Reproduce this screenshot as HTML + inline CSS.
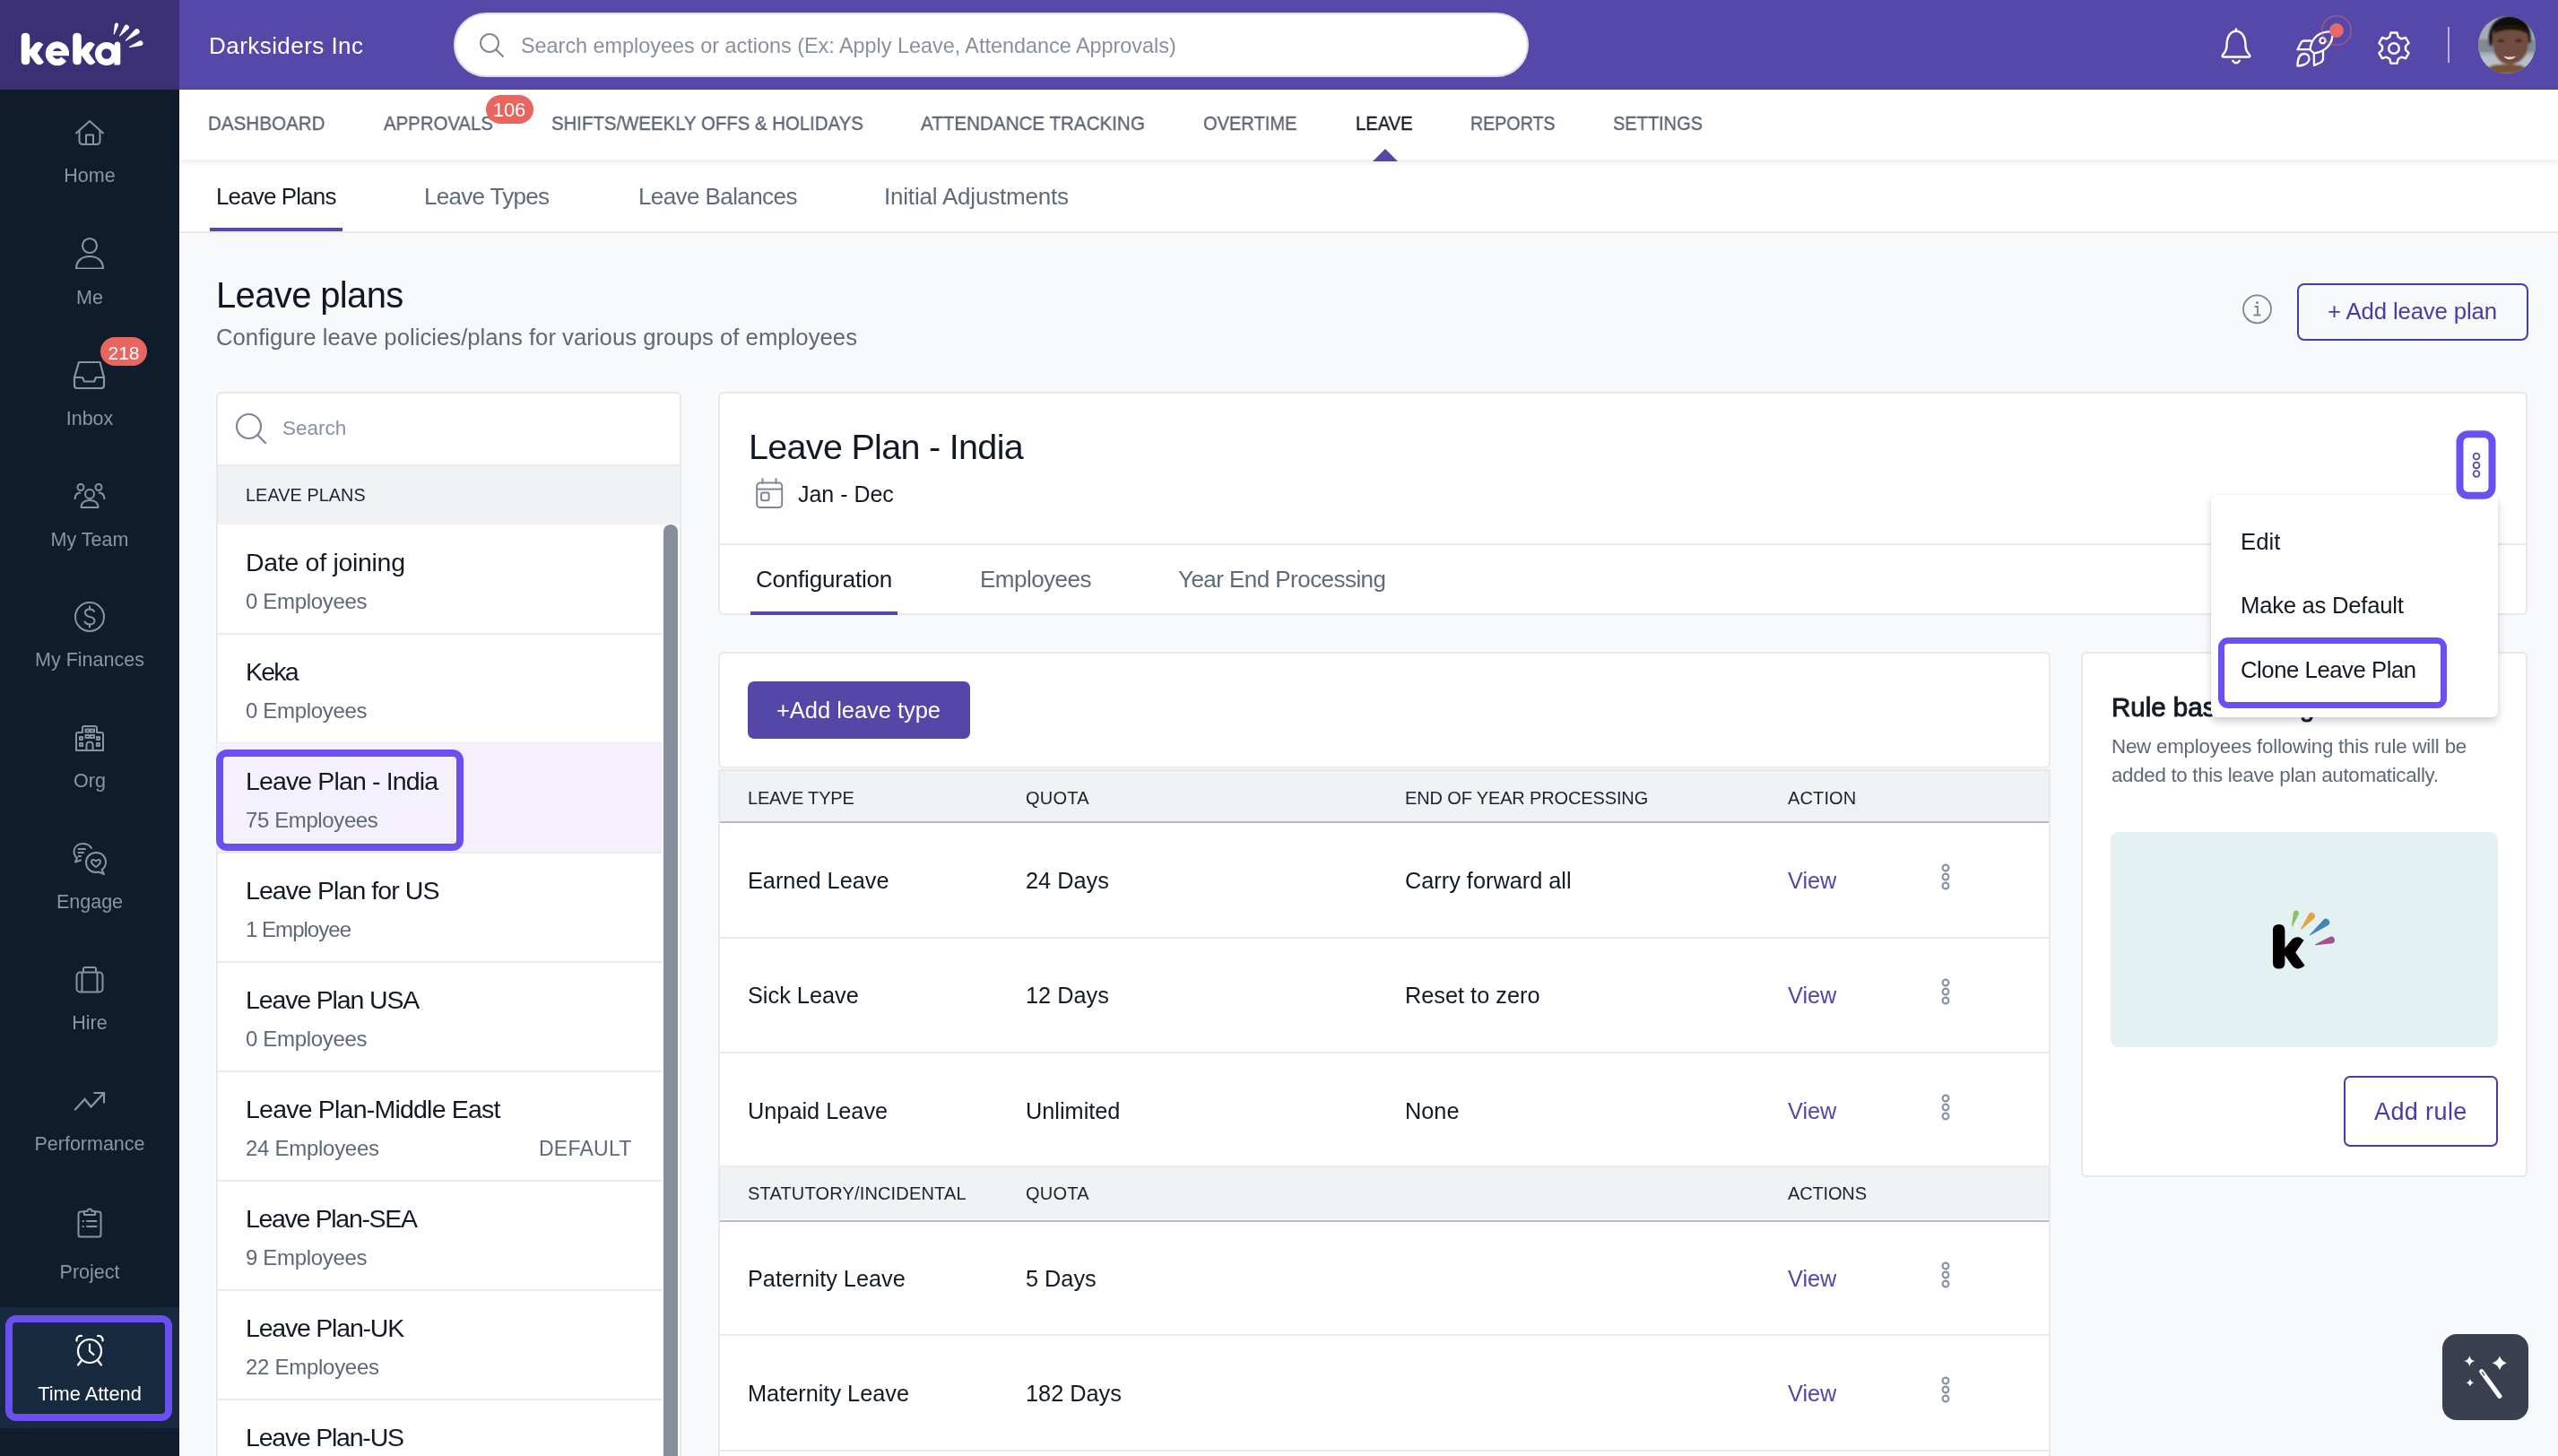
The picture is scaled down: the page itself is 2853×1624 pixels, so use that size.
<!DOCTYPE html>
<html><head><meta charset="utf-8"><title>Leave plans</title>
<style>
html,body{margin:0;padding:0;}
body{width:2853px;height:1624px;overflow:hidden;position:relative;background:#f8f9fb;font-family:"Liberation Sans", sans-serif;}
</style></head><body>
<div style="position:absolute;left:0px;top:0px;width:200px;height:100px;background:#3c3074"></div>
<div style="position:absolute;left:200px;top:0px;width:2653px;height:100px;background:#5648a9"></div>
<div style="position:absolute;left:0px;top:100px;width:200px;height:1524px;background:#0e1c2b"></div>
<svg style="position:absolute;left:0px;top:0px;" width="200" height="100" viewBox="0 0 200 100" fill="none">
<path transform="translate(16.6 18.3) scale(0.712)" d="M10 32 Q10 26 16.7 26 Q23.4 26 23.4 33 L23.4 52.5 L31.5 42.5 Q35.5 39.2 40 40.5 L44.5 43.8 L35.2 57.5 L45.5 71.8 Q41.5 75.8 37 75.6 Q33.8 75.2 31.5 72 L23.4 60.5 L23.4 69 Q23.4 75.6 16.7 75.6 Q10 75.6 10 69 Z" fill="#fff"/><path transform="translate(74.1 18.3) scale(0.712)" d="M10 32 Q10 26 16.7 26 Q23.4 26 23.4 33 L23.4 52.5 L31.5 42.5 Q35.5 39.2 40 40.5 L44.5 43.8 L35.2 57.5 L45.5 71.8 Q41.5 75.8 37 75.6 Q33.8 75.2 31.5 72 L23.4 60.5 L23.4 69 Q23.4 75.6 16.7 75.6 Q10 75.6 10 69 Z" fill="#fff"/><path d="M73.3 59.5 A9.4 9.7 0 1 0 71.2 65.9" stroke="#fff" stroke-width="7.4" fill="none"/><rect x="56" y="57" width="21" height="5.2" fill="#fff"/><ellipse cx="118.8" cy="60" rx="9.2" ry="9.4" stroke="#fff" stroke-width="7.2" fill="none"/><path d="M127.5 51 Q127.5 46.5 131 46.5 Q134.3 46.5 134.3 51 L134.3 70 Q134.3 72.6 131.5 72.6 L127.5 72.6 Z" fill="#fff"/>
<path d="M127.78 37.96 L132.13 28.31 A2.2 2.2 0 0 0 127.89 27.13 L126.62 37.64 A0.6 0.6 0 0 0 127.78 37.96 Z" fill="#fff"/><path d="M134.07 40.37 L143.29 32.13 A2.8 2.8 0 0 0 138.87 28.69 L133.13 39.63 A0.6 0.6 0 0 0 134.07 40.37 Z" fill="#fff"/><path d="M140.88 45.47 L154.55 37.56 A3.1 3.1 0 0 0 150.64 32.75 L140.12 44.53 A0.6 0.6 0 0 0 140.88 45.47 Z" fill="#fff"/><path d="M144.80 52.97 L157.51 50.99 A2.9 2.9 0 0 0 155.61 45.51 L144.40 51.83 A0.6 0.6 0 0 0 144.80 52.97 Z" fill="#fff"/></svg>
<div style="position:absolute;left:233.4px;top:38.00px;font-size:26px;line-height:1;color:#ffffff;font-weight:400;letter-spacing:0.450px;white-space:nowrap;will-change:transform;">Darksiders Inc</div>
<div style="position:absolute;left:506px;top:14px;width:1199px;height:72px;background:#fff;border-radius:36px;box-sizing:border-box;border:2px solid #dcdce5"></div>
<svg style="position:absolute;left:533px;top:35px;" width="32" height="32" viewBox="0 0 32 32" fill="none"><circle cx="13" cy="13" r="10" stroke="#7d8797" stroke-width="2"/><path d="M20.5 20.5 L28 28" stroke="#7d8797" stroke-width="2.2" stroke-linecap="round"/></svg>
<div style="position:absolute;left:581px;top:40.31px;font-size:23.4px;line-height:1;color:#8690a0;font-weight:400;letter-spacing:0.000px;white-space:nowrap;will-change:transform;">Search employees or actions (Ex: Apply Leave, Attendance Approvals)</div>
<svg style="position:absolute;left:2474px;top:28px;" width="40" height="48" viewBox="0 0 40 48" fill="none"><g stroke="#fff" stroke-width="2.4" stroke-linecap="round" stroke-linejoin="round">
<path d="M20 4.5 v2"/>
<path d="M9.5 23 C9.5 12.5 14 6.8 20 6.8 C26 6.8 30.5 12.5 30.5 23 C30.5 27.5 32 30 34.8 33 Q36.5 35.5 33.5 35.5 H6.5 Q3.5 35.5 5.2 33 C8 30 9.5 27.5 9.5 23 Z"/>
<path d="M16.2 39.8 Q20 44.8 23.8 39.8"/>
</g></svg>
<svg style="position:absolute;left:2555px;top:25px;overflow:visible" width="60" height="55" viewBox="0 0 60 55" fill="none"><g stroke="#fff" stroke-width="2.3" stroke-linejoin="round" stroke-linecap="round">
<path d="M21.5 30.5 C22.5 17 32 9.5 46.5 10.5 C47.5 24 39 32.5 26 34.5 Z"/>
<circle cx="35.5" cy="20.2" r="3.1"/>
<path d="M22 20.5 L14.5 20.5 Q12.5 20.5 11.5 22.5 L7.5 30.2 L21.5 30.2"/>
<path d="M25.8 34.5 L26 48 L33.5 44.5 Q36 43 36 40 L36 31.8"/>
<path d="M7.5 48.5 C7.5 40 10 35 15 35 C18.5 35 21 37.5 20.5 41 C20 46 13 48.5 7.5 48.5 Z"/>
</g>
<circle cx="51" cy="9" r="16.2" stroke="#e8706a" stroke-opacity="0.45" stroke-width="1.6"/>
<circle cx="51" cy="9" r="7.9" fill="#e8696a"/></svg>
<svg style="position:absolute;left:2650px;top:33px;" width="40" height="42" viewBox="0 0 40 42" fill="none"><g stroke="#fff" stroke-width="2.4" stroke-linejoin="round">
<path d="M16.5 3.5 h7 l1.2 4.8 l3.6 2.1 l4.8 -1.4 l3.5 6 l-3.6 3.5 v4.1 l3.6 3.5 l-3.5 6 l-4.8 -1.4 l-3.6 2.1 l-1.2 4.8 h-7 l-1.2 -4.8 l-3.6 -2.1 l-4.8 1.4 l-3.5 -6 l3.6 -3.5 v-4.1 l-3.6 -3.5 l3.5 -6 l4.8 1.4 l3.6 -2.1 Z"/>
<circle cx="20" cy="21" r="5.8"/>
</g></svg>
<div style="position:absolute;left:2730px;top:30px;width:2px;height:40px;background:#b6aee0"></div>
<svg style="position:absolute;left:2764px;top:18px;" width="64" height="64" viewBox="0 0 64 64" fill="none"><defs><clipPath id="av"><circle cx="32" cy="32" r="32"/></clipPath>
<filter id="bl" x="-20%" y="-20%" width="140%" height="140%"><feGaussianBlur stdDeviation="1.3"/></filter></defs>
<g clip-path="url(#av)">
<rect width="64" height="64" fill="#a3acb2"/>
<g filter="url(#bl)">
<rect x="-4" y="26" width="72" height="14" fill="#7f8a92"/>
<rect x="-4" y="44" width="72" height="14" fill="#b7c1c8"/>
<path d="M12 32 C10 14 18 0 36 0 C52 0 60 12 58.5 30 L56 30 C54 20 50 14 44 12 C36 10 24 10 18 14 C16 22 16 28 15 34 Z" fill="#0e0b0a"/>
<path d="M16 24 C15 13 22 10.5 36 10.5 C50 10.5 56 15 56 26 C56 40 52 52 36 54 C22 54 16 42 16 24 Z" fill="#6f4e40"/>
<path d="M18 14 C24 9 46 8 55 15 L55 20 C48 14 26 14 18 20 Z" fill="#1a1210"/>
<ellipse cx="25.5" cy="27.5" rx="3.5" ry="1.5" fill="#2b1b14"/>
<ellipse cx="45" cy="27.5" rx="3.5" ry="1.5" fill="#2b1b14"/>
<path d="M6 64 C8 56 18 53 32 54 C46 53 56 56 58 64 Z" fill="#7a5236"/>
</g>
<path d="M28.5 44.5 C31 49.5 39 49.5 42 44.5 C38 45.8 32 45.8 28.5 44.5 Z" fill="#e9ddd6"/>
</g></svg>
<svg style="position:absolute;left:80px;top:130px;" width="40" height="40" viewBox="0 0 40 40" fill="none"><g stroke="#8b939f" stroke-width="2" stroke-linecap="round" stroke-linejoin="round"><path d="M5 18.5 L20 5 L35 18.5"/><path d="M8.5 15.5 V27 Q8.5 31 12.5 31 H27.5 Q31.5 31 31.5 27 V15.5"/><path d="M16 31 V20.5 H24 V31"/></g></svg>
<div style="position:absolute;left:100px;transform:translateX(-50%);top:185.92px;font-size:21.5px;line-height:1;color:#8d95a1;font-weight:400;letter-spacing:0.000px;white-space:nowrap;will-change:transform;">Home</div>
<svg style="position:absolute;left:80px;top:260px;" width="40" height="40" viewBox="0 0 40 40" fill="none"><g stroke="#8b939f" stroke-width="2.2"><circle cx="20" cy="14" r="8"/><path d="M5 39.5 C5 31 11 26 20 26 C29 26 35 31 35 39.5 Z" stroke-linejoin="round"/></g></svg>
<div style="position:absolute;left:100px;transform:translateX(-50%);top:321.93px;font-size:21.5px;line-height:1;color:#8d95a1;font-weight:400;letter-spacing:0.000px;white-space:nowrap;will-change:transform;">Me</div>
<svg style="position:absolute;left:80px;top:398px;" width="40" height="40" viewBox="0 0 40 40" fill="none"><g stroke="#8b939f" stroke-width="2.2" stroke-linejoin="round"><path d="M8 6 H31.5 L36 23 V32 Q36 35 33 35 H6 Q3 35 3 32 V23 Z"/><path d="M3.5 23 H12 L14 27.5 H25 L27 23 H35.5"/></g></svg>
<div style="position:absolute;left:100px;transform:translateX(-50%);top:456.93px;font-size:21.5px;line-height:1;color:#8d95a1;font-weight:400;letter-spacing:0.000px;white-space:nowrap;will-change:transform;">Inbox</div>
<svg style="position:absolute;left:80px;top:535px;" width="40" height="40" viewBox="0 0 40 40" fill="none"><g stroke="#8b939f" stroke-width="2"><circle cx="20" cy="16" r="5"/><circle cx="10" cy="8.5" r="3.5"/><circle cx="30" cy="8.5" r="3.5"/><path d="M10.5 31 C10.5 26 14.5 23 20 23 C25.5 23 29.5 26 29.5 31 Z" stroke-linejoin="round"/><path d="M3.5 22 C3.5 17 6 14.5 10 14.5"/><path d="M36.5 22 C36.5 17 34 14.5 30 14.5"/></g></svg>
<div style="position:absolute;left:100px;transform:translateX(-50%);top:591.93px;font-size:21.5px;line-height:1;color:#8d95a1;font-weight:400;letter-spacing:0.000px;white-space:nowrap;will-change:transform;">My Team</div>
<svg style="position:absolute;left:80px;top:668px;" width="40" height="40" viewBox="0 0 40 40" fill="none"><g stroke="#8b939f" stroke-width="2" stroke-linecap="round"><circle cx="20" cy="20" r="16"/><path d="M25 14 C24 12 22 11.5 20 11.5 C17 11.5 15 13 15 15.5 C15 18.5 18 19.5 20 20 C23 20.5 25.5 21.5 25.5 24.5 C25.5 27 23 28.5 20 28.5 C17.5 28.5 15.5 27.5 14.5 25.5"/><path d="M20 8.5 V11.5 M20 28.5 V31.5"/></g></svg>
<div style="position:absolute;left:100px;transform:translateX(-50%);top:725.93px;font-size:21.5px;line-height:1;color:#8d95a1;font-weight:400;letter-spacing:0.000px;white-space:nowrap;will-change:transform;">My Finances</div>
<svg style="position:absolute;left:80px;top:805px;" width="40" height="40" viewBox="0 0 40 40" fill="none"><g stroke="#8b939f" stroke-width="2" stroke-linejoin="round"><path d="M5 32 V14 Q5 12 7 12 H12 V7 Q12 5 14 5 H26 Q28 5 28 7 V12 H33 Q35 12 35 14 V32 Z"/><rect x="15.5" y="8.5" width="4" height="3"/><rect x="21" y="8.5" width="4" height="3"/><rect x="15.5" y="15" width="4" height="3"/><rect x="21" y="15" width="4" height="3"/><rect x="9" y="17" width="3" height="3"/><rect x="28" y="17" width="3" height="3"/><rect x="9" y="24" width="3" height="3"/><rect x="28" y="24" width="3" height="3"/><path d="M16.5 32 V26 Q16.5 22.5 20 22.5 Q23.5 22.5 23.5 26 V32"/></g></svg>
<div style="position:absolute;left:100px;transform:translateX(-50%);top:861.43px;font-size:21.5px;line-height:1;color:#8d95a1;font-weight:400;letter-spacing:0.000px;white-space:nowrap;will-change:transform;">Org</div>
<svg style="position:absolute;left:80px;top:938px;" width="40" height="40" viewBox="0 0 40 40" fill="none"><g stroke="#8b939f" stroke-width="2" stroke-linejoin="round" stroke-linecap="round"><path d="M22 8 C20 4.5 16 3 12 3 C6.5 3 2.5 7 2.5 12 C2.5 15 4 17.5 6 19 L4 23.5 L10 21.5"/><path d="M7.5 9 H15 M7.5 13 H13 M7.5 17 H10"/><path d="M27 13 C34 13 38 18 38 23.5 C38 27.5 36 30.5 33.5 32 L36 37 L30 34.5 C29 34.8 28 35 27 35 C20.5 35 16 30 16 24 C16 18 20.5 13 27 13 Z"/><path d="M27 29 C24 27 22 25 22 23 C22 21 24.5 20 27 22.5 C29.5 20 32 21 32 23 C32 25 30 27 27 29 Z"/></g></svg>
<div style="position:absolute;left:100px;transform:translateX(-50%);top:995.93px;font-size:21.5px;line-height:1;color:#8d95a1;font-weight:400;letter-spacing:0.000px;white-space:nowrap;will-change:transform;">Engage</div>
<svg style="position:absolute;left:80px;top:1074px;" width="40" height="40" viewBox="0 0 40 40" fill="none"><g stroke="#8b939f" stroke-width="2" stroke-linejoin="round"><rect x="5.5" y="10.5" width="29" height="22" rx="4"/><path d="M13 10.5 V7 Q13 5 15 5 H25 Q27 5 27 7 V10.5"/><path d="M11.5 10.5 V32.5 M28.5 10.5 V32.5"/></g></svg>
<div style="position:absolute;left:100px;transform:translateX(-50%);top:1130.92px;font-size:21.5px;line-height:1;color:#8d95a1;font-weight:400;letter-spacing:0.000px;white-space:nowrap;will-change:transform;">Hire</div>
<svg style="position:absolute;left:80px;top:1210px;" width="40" height="40" viewBox="0 0 40 40" fill="none"><g stroke="#8b939f" stroke-width="2.2" stroke-linecap="square"><path d="M4 27.5 L14.5 16 L21.5 24.5 L35.5 9.5"/><path d="M25.5 9 H36 V19.5"/></g></svg>
<div style="position:absolute;left:100px;transform:translateX(-50%);top:1265.92px;font-size:21.5px;line-height:1;color:#8d95a1;font-weight:400;letter-spacing:0.000px;white-space:nowrap;will-change:transform;">Performance</div>
<svg style="position:absolute;left:80px;top:1343px;" width="40" height="40" viewBox="0 0 40 40" fill="none"><g stroke="#8b939f" stroke-width="2" stroke-linejoin="round" stroke-linecap="round"><path d="M14 8.5 H10 Q7.5 8.5 7.5 11 V34 Q7.5 36.5 10 36.5 H30 Q32.5 36.5 32.5 34 V11 Q32.5 8.5 30 8.5 H26"/><path d="M14 12 V8 H17.5 A2.5 2.5 0 0 1 22.5 8 H26 V12 Z"/><path d="M12.5 19 h0.5 M12.5 25 h0.5 M17 19 H27.5 M17 25 H27.5"/></g></svg>
<div style="position:absolute;left:100px;transform:translateX(-50%);top:1408.92px;font-size:21.5px;line-height:1;color:#8d95a1;font-weight:400;letter-spacing:0.000px;white-space:nowrap;will-change:transform;">Project</div>
<div style="position:absolute;left:112px;top:376px;width:52px;height:32px;background:#e8665f;border-radius:16px"></div>
<div style="position:absolute;left:138px;transform:translateX(-50%);top:383.15px;font-size:21px;line-height:1;color:#fff;font-weight:400;letter-spacing:0.000px;white-space:nowrap;will-change:transform;">218</div>
<div style="position:absolute;left:0px;top:1458px;width:200px;height:135px;background:#182a40"></div>
<div style="position:absolute;left:6px;top:1467px;width:186px;height:118px;box-sizing:border-box;border:8px solid #6c4ff0;border-radius:12px"></div>
<svg style="position:absolute;left:80px;top:1486px;" width="40" height="40" viewBox="0 0 40 40" fill="none"><g stroke="#fff" stroke-width="2.2" stroke-linecap="round" stroke-linejoin="round"><circle cx="20" cy="21" r="13"/><path d="M20 13.5 V21 L24.5 25"/><path d="M5.5 9.5 C5 6 7.5 3.5 11 4"/><path d="M34.5 9.5 C35 6 32.5 3.5 29 4"/><path d="M10.5 32 L7 36.5 M29.5 32 L33 36.5"/></g></svg>
<div style="position:absolute;left:100px;transform:translateX(-50%);top:1543.97px;font-size:21.8px;line-height:1;color:#ffffff;font-weight:400;letter-spacing:0.000px;white-space:nowrap;will-change:transform;">Time Attend</div>
<div style="position:absolute;left:200px;top:100px;width:2653px;height:78px;background:#fff;box-shadow:0 3px 8px rgba(20,30,50,0.10);z-index:2"></div>
<div style="position:absolute;left:232px;transform:scaleX(0.9287);transform-origin:0 0;top:127.13px;font-size:22.2px;line-height:1;color:#5a6575;font-weight:400;letter-spacing:0.000px;white-space:nowrap;will-change:transform;z-index:3;-webkit-text-stroke:0.35px #5a6575">DASHBOARD</div>
<div style="position:absolute;left:428px;transform:scaleX(0.9184);transform-origin:0 0;top:127.13px;font-size:22.2px;line-height:1;color:#5a6575;font-weight:400;letter-spacing:0.000px;white-space:nowrap;will-change:transform;z-index:3;-webkit-text-stroke:0.35px #5a6575">APPROVALS</div>
<div style="position:absolute;left:615px;transform:scaleX(0.9189);transform-origin:0 0;top:127.13px;font-size:22.2px;line-height:1;color:#5a6575;font-weight:400;letter-spacing:0.000px;white-space:nowrap;will-change:transform;z-index:3;-webkit-text-stroke:0.35px #5a6575">SHIFTS/WEEKLY OFFS &amp; HOLIDAYS</div>
<div style="position:absolute;left:1027px;transform:scaleX(0.9283);transform-origin:0 0;top:127.13px;font-size:22.2px;line-height:1;color:#5a6575;font-weight:400;letter-spacing:0.000px;white-space:nowrap;will-change:transform;z-index:3;-webkit-text-stroke:0.35px #5a6575">ATTENDANCE TRACKING</div>
<div style="position:absolute;left:1342px;transform:scaleX(0.9044);transform-origin:0 0;top:127.13px;font-size:22.2px;line-height:1;color:#5a6575;font-weight:400;letter-spacing:0.000px;white-space:nowrap;will-change:transform;z-index:3;-webkit-text-stroke:0.35px #5a6575">OVERTIME</div>
<div style="position:absolute;left:1511.8px;transform:scaleX(0.9109);transform-origin:0 0;top:127.13px;font-size:22.2px;line-height:1;color:#141b27;font-weight:400;letter-spacing:0.000px;white-space:nowrap;will-change:transform;z-index:3;-webkit-text-stroke:0.35px #141b27">LEAVE</div>
<div style="position:absolute;left:1640px;transform:scaleX(0.8848);transform-origin:0 0;top:127.13px;font-size:22.2px;line-height:1;color:#5a6575;font-weight:400;letter-spacing:0.000px;white-space:nowrap;will-change:transform;z-index:3;-webkit-text-stroke:0.35px #5a6575">REPORTS</div>
<div style="position:absolute;left:1799px;transform:scaleX(0.9008);transform-origin:0 0;top:127.13px;font-size:22.2px;line-height:1;color:#5a6575;font-weight:400;letter-spacing:0.000px;white-space:nowrap;will-change:transform;z-index:3;-webkit-text-stroke:0.35px #5a6575">SETTINGS</div>
<div style="position:absolute;left:541.5px;top:105.5px;width:53px;height:32px;background:#e8665f;border-radius:16px;z-index:4"></div>
<div style="position:absolute;left:568px;transform:translateX(-50%);top:111.60px;font-size:22px;line-height:1;color:#fff;font-weight:400;letter-spacing:0.000px;white-space:nowrap;will-change:transform;z-index:5">106</div>
<svg style="position:absolute;left:1531px;top:166px;z-index:4" width="28" height="14" viewBox="0 0 28 14" fill="none"><path d="M0 14 L14 0 L28 14 Z" fill="#5648a9"/></svg>
<div style="position:absolute;left:200px;top:178px;width:2653px;height:82px;background:#fff;box-sizing:border-box;border-bottom:2px solid #e6e8ea"></div>
<div style="position:absolute;left:240.6px;top:205.50px;font-size:26px;line-height:1;color:#141b27;font-weight:400;letter-spacing:-0.870px;white-space:nowrap;will-change:transform;">Leave Plans</div>
<div style="position:absolute;left:473px;top:205.50px;font-size:26px;line-height:1;color:#5f6a7a;font-weight:400;letter-spacing:-0.696px;white-space:nowrap;will-change:transform;">Leave Types</div>
<div style="position:absolute;left:711.6px;top:205.50px;font-size:26px;line-height:1;color:#5f6a7a;font-weight:400;letter-spacing:-0.586px;white-space:nowrap;will-change:transform;">Leave Balances</div>
<div style="position:absolute;left:986px;top:205.50px;font-size:26px;line-height:1;color:#5f6a7a;font-weight:400;letter-spacing:-0.197px;white-space:nowrap;will-change:transform;">Initial Adjustments</div>
<div style="position:absolute;left:234px;top:254px;width:148px;height:4px;background:#5648a9"></div>
<div style="position:absolute;left:240.7px;top:309.00px;font-size:40px;line-height:1;color:#0f1726;font-weight:400;letter-spacing:-0.642px;white-space:nowrap;will-change:transform;">Leave plans</div>
<div style="position:absolute;left:240.7px;top:363.86px;font-size:25.7px;line-height:1;color:#5d6878;font-weight:400;letter-spacing:0.017px;white-space:nowrap;will-change:transform;">Configure leave policies/plans for various groups of employees</div>
<svg style="position:absolute;left:2500px;top:327px;" width="36" height="36" viewBox="0 0 36 36" fill="none"><circle cx="17.5" cy="17.8" r="15.5" stroke="#7b8594" stroke-width="1.8"/><circle cx="17.5" cy="10.5" r="1.5" fill="#7b8594"/><path d="M14.5 15 H18 V24.5 M13.5 24.5 H21.5" stroke="#7b8594" stroke-width="1.8"/></svg>
<div style="position:absolute;left:2562px;top:316px;width:258px;height:64px;box-sizing:border-box;border:2px solid #4a3ba8;border-radius:8px"></div>
<div style="position:absolute;left:2595.7px;top:335.47px;font-size:25.8px;line-height:1;color:#4a3ba8;font-weight:400;letter-spacing:-0.161px;white-space:nowrap;will-change:transform;">+ Add leave plan</div>
<div style="position:absolute;left:240.5px;top:437px;width:519px;height:1200px;background:#fff;box-sizing:border-box;border:2px solid #e8e9ec;border-radius:6px"></div>
<svg style="position:absolute;left:261px;top:459px;" width="40" height="40" viewBox="0 0 40 40" fill="none"><circle cx="16.5" cy="16.5" r="13.5" stroke="#7d8797" stroke-width="2.2"/><path d="M26.5 26.5 L35 35" stroke="#7d8797" stroke-width="2.4" stroke-linecap="round"/></svg>
<div style="position:absolute;left:314.8px;top:466.88px;font-size:22.5px;line-height:1;color:#8790a0;font-weight:400;letter-spacing:0.000px;white-space:nowrap;will-change:transform;">Search</div>
<div style="position:absolute;left:242.5px;top:517.5px;width:515px;height:67.5px;background:#f1f2f4;box-sizing:border-box;border-top:2px solid #e8e9ec"></div>
<div style="position:absolute;left:274.2px;top:542.57px;font-size:19.8px;line-height:1;color:#1b2230;font-weight:400;letter-spacing:0.100px;white-space:nowrap;will-change:transform;">LEAVE PLANS</div>
<div style="position:absolute;left:242.5px;top:705.5px;width:496.5px;height:2px;background:#e9eaed"></div>
<div style="position:absolute;left:274px;top:612.57px;font-size:28.5px;line-height:1;color:#121a26;font-weight:400;letter-spacing:-0.300px;white-space:nowrap;will-change:transform;">Date of joining</div>
<div style="position:absolute;left:274px;top:659.10px;font-size:24px;line-height:1;color:#5d6878;font-weight:400;letter-spacing:-0.324px;white-space:nowrap;will-change:transform;">0 Employees</div>
<div style="position:absolute;left:242.5px;top:827.55px;width:496.5px;height:2px;background:#e9eaed"></div>
<div style="position:absolute;left:274px;top:734.62px;font-size:28.5px;line-height:1;color:#121a26;font-weight:400;letter-spacing:-1.787px;white-space:nowrap;will-change:transform;">Keka</div>
<div style="position:absolute;left:274px;top:781.15px;font-size:24px;line-height:1;color:#5d6878;font-weight:400;letter-spacing:-0.324px;white-space:nowrap;will-change:transform;">0 Employees</div>
<div style="position:absolute;left:242px;top:829.1px;width:497px;height:121px;background:#f4f1fd"></div>
<div style="position:absolute;left:242.5px;top:949.6px;width:496.5px;height:2px;background:#e9eaed"></div>
<div style="position:absolute;left:274px;top:856.67px;font-size:28.5px;line-height:1;color:#121a26;font-weight:400;letter-spacing:-0.867px;white-space:nowrap;will-change:transform;">Leave Plan - India</div>
<div style="position:absolute;left:274px;top:903.20px;font-size:24px;line-height:1;color:#5d6878;font-weight:400;letter-spacing:-0.390px;white-space:nowrap;will-change:transform;">75 Employees</div>
<div style="position:absolute;left:242.5px;top:1071.65px;width:496.5px;height:2px;background:#e9eaed"></div>
<div style="position:absolute;left:274px;top:978.72px;font-size:28.5px;line-height:1;color:#121a26;font-weight:400;letter-spacing:-0.925px;white-space:nowrap;will-change:transform;">Leave Plan for US</div>
<div style="position:absolute;left:274px;top:1025.25px;font-size:24px;line-height:1;color:#5d6878;font-weight:400;letter-spacing:-0.971px;white-space:nowrap;will-change:transform;">1 Employee</div>
<div style="position:absolute;left:242.5px;top:1193.7px;width:496.5px;height:2px;background:#e9eaed"></div>
<div style="position:absolute;left:274px;top:1100.78px;font-size:28.5px;line-height:1;color:#121a26;font-weight:400;letter-spacing:-1.141px;white-space:nowrap;will-change:transform;">Leave Plan USA</div>
<div style="position:absolute;left:274px;top:1147.30px;font-size:24px;line-height:1;color:#5d6878;font-weight:400;letter-spacing:-0.324px;white-space:nowrap;will-change:transform;">0 Employees</div>
<div style="position:absolute;left:242.5px;top:1315.75px;width:496.5px;height:2px;background:#e9eaed"></div>
<div style="position:absolute;left:274px;top:1222.83px;font-size:28.5px;line-height:1;color:#121a26;font-weight:400;letter-spacing:-0.786px;white-space:nowrap;will-change:transform;">Leave Plan-Middle East</div>
<div style="position:absolute;left:274px;top:1269.35px;font-size:24px;line-height:1;color:#5d6878;font-weight:400;letter-spacing:-0.281px;white-space:nowrap;will-change:transform;">24 Employees</div>
<div style="position:absolute;left:601px;top:1270.20px;font-size:23px;line-height:1;color:#5d6878;font-weight:400;letter-spacing:0.247px;white-space:nowrap;will-change:transform;">DEFAULT</div>
<div style="position:absolute;left:242.5px;top:1437.8px;width:496.5px;height:2px;background:#e9eaed"></div>
<div style="position:absolute;left:274px;top:1344.88px;font-size:28.5px;line-height:1;color:#121a26;font-weight:400;letter-spacing:-1.318px;white-space:nowrap;will-change:transform;">Leave Plan-SEA</div>
<div style="position:absolute;left:274px;top:1391.40px;font-size:24px;line-height:1;color:#5d6878;font-weight:400;letter-spacing:-0.324px;white-space:nowrap;will-change:transform;">9 Employees</div>
<div style="position:absolute;left:242.5px;top:1559.85px;width:496.5px;height:2px;background:#e9eaed"></div>
<div style="position:absolute;left:274px;top:1466.92px;font-size:28.5px;line-height:1;color:#121a26;font-weight:400;letter-spacing:-1.208px;white-space:nowrap;will-change:transform;">Leave Plan-UK</div>
<div style="position:absolute;left:274px;top:1513.45px;font-size:24px;line-height:1;color:#5d6878;font-weight:400;letter-spacing:-0.281px;white-space:nowrap;will-change:transform;">22 Employees</div>
<div style="position:absolute;left:242.5px;top:1681.9px;width:496.5px;height:2px;background:#e9eaed"></div>
<div style="position:absolute;left:274px;top:1588.98px;font-size:28.5px;line-height:1;color:#121a26;font-weight:400;letter-spacing:-1.224px;white-space:nowrap;will-change:transform;">Leave Plan-US</div>
<div style="position:absolute;left:740.2px;top:585px;width:15.8px;height:1100px;background:#878f9c;border-radius:8px;box-shadow:0 0 0 1.5px #fff"></div>
<div style="position:absolute;left:241px;top:835.5px;width:276px;height:113px;box-sizing:border-box;border:8px solid #6c4ff0;border-radius:12px;z-index:6"></div>
<div style="position:absolute;left:801px;top:437px;width:2018px;height:249px;background:#fff;box-sizing:border-box;border:2px solid #e8e9ec;border-radius:6px"></div>
<div style="position:absolute;left:834.7px;top:478.93px;font-size:39.5px;line-height:1;color:#121a26;font-weight:400;letter-spacing:-0.689px;white-space:nowrap;will-change:transform;">Leave Plan - India</div>
<svg style="position:absolute;left:840px;top:531px;" width="36" height="38" viewBox="0 0 36 38" fill="none"><g stroke="#7d8797" stroke-width="2" stroke-linejoin="round"><rect x="4.2" y="7.6" width="28" height="27.4" rx="3.5"/><path d="M4.2 14.6 H32.2"/><path d="M10.5 3 V8 M25.5 3 V8" stroke-linecap="round"/><rect x="9" y="18.5" width="8.6" height="8.8" rx="2"/></g></svg>
<div style="position:absolute;left:890px;top:538.65px;font-size:25px;line-height:1;color:#121a26;font-weight:400;letter-spacing:-0.023px;white-space:nowrap;will-change:transform;">Jan - Dec</div>
<div style="position:absolute;left:803px;top:605.5px;width:2014px;height:2px;background:#e8e9ec"></div>
<div style="position:absolute;left:842.8px;top:633.30px;font-size:26px;line-height:1;color:#121a26;font-weight:400;letter-spacing:-0.205px;white-space:nowrap;will-change:transform;">Configuration</div>
<div style="position:absolute;left:1092.6px;top:633.30px;font-size:26px;line-height:1;color:#5f6a7a;font-weight:400;letter-spacing:-0.527px;white-space:nowrap;will-change:transform;">Employees</div>
<div style="position:absolute;left:1313.9px;top:633.30px;font-size:26px;line-height:1;color:#5f6a7a;font-weight:400;letter-spacing:-0.548px;white-space:nowrap;will-change:transform;">Year End Processing</div>
<div style="position:absolute;left:837px;top:682px;width:164px;height:4px;background:#5648a9"></div>
<svg style="position:absolute;left:2738px;top:478px;z-index:11" width="48" height="80" viewBox="0 0 48 80" fill="none"><rect x="5.5" y="6.2" width="36" height="68.5" rx="9" stroke="#6c4ff0" stroke-width="8"/><g stroke="#5547a8" stroke-width="1.8"><circle cx="24" cy="31" r="3.4"/><circle cx="24" cy="41" r="3.4"/><circle cx="24" cy="50.5" r="3.4"/></g></svg>
<div style="position:absolute;left:801px;top:727px;width:1486px;height:130px;background:#fff;box-sizing:border-box;border:2px solid #e8e9ec;border-radius:6px"></div>
<div style="position:absolute;left:801px;top:858px;width:1486px;height:900px;background:#fff;box-sizing:border-box;border:2px solid #e8e9ec"></div>
<div style="position:absolute;left:834px;top:760px;width:248px;height:64px;background:#5547a8;border-radius:7px"></div>
<div style="position:absolute;left:866px;top:780.33px;font-size:25.5px;line-height:1;color:#fff;font-weight:400;letter-spacing:-0.043px;white-space:nowrap;will-change:transform;">+Add leave type</div>
<div style="position:absolute;left:803px;top:860px;width:1482px;height:56px;background:#f1f2f4"></div>
<div style="position:absolute;left:803px;top:916px;width:1482px;height:2px;background:#b3bbc7"></div>
<div style="position:absolute;left:834.4px;top:879.50px;font-size:20px;line-height:1;color:#1b2230;font-weight:400;letter-spacing:-0.181px;white-space:nowrap;will-change:transform;">LEAVE TYPE</div>
<div style="position:absolute;left:1143.9px;top:879.50px;font-size:20px;line-height:1;color:#1b2230;font-weight:400;letter-spacing:0.217px;white-space:nowrap;will-change:transform;">QUOTA</div>
<div style="position:absolute;left:1567px;top:879.50px;font-size:20px;line-height:1;color:#1b2230;font-weight:400;letter-spacing:-0.140px;white-space:nowrap;will-change:transform;">END OF YEAR PROCESSING</div>
<div style="position:absolute;left:1994.4px;top:879.50px;font-size:20px;line-height:1;color:#1b2230;font-weight:400;letter-spacing:0.128px;white-space:nowrap;will-change:transform;">ACTION</div>
<div style="position:absolute;left:834px;top:970.00px;font-size:25.3px;line-height:1;color:#121a26;font-weight:400;letter-spacing:0.000px;white-space:nowrap;will-change:transform;">Earned Leave</div>
<div style="position:absolute;left:1144px;top:970.00px;font-size:25.3px;line-height:1;color:#121a26;font-weight:400;letter-spacing:0.000px;white-space:nowrap;will-change:transform;">24 Days</div>
<div style="position:absolute;left:1567px;top:970.00px;font-size:25.3px;line-height:1;color:#121a26;font-weight:400;letter-spacing:0.000px;white-space:nowrap;will-change:transform;">Carry forward all</div>
<div style="position:absolute;left:1994.4px;top:970.00px;font-size:25.3px;line-height:1;color:#5547a8;font-weight:400;letter-spacing:0.000px;white-space:nowrap;will-change:transform;">View</div>
<svg style="position:absolute;left:2161.5px;top:960.2px;" width="16" height="36" viewBox="0 0 16 36" fill="none"><g stroke="#8a93a3" stroke-width="2.1"><circle cx="8" cy="8" r="3.4"/><circle cx="8" cy="18" r="3.4"/><circle cx="8" cy="28" r="3.4"/></g></svg>
<div style="position:absolute;left:803px;top:1045px;width:1482px;height:2px;background:#e9eaed"></div>
<div style="position:absolute;left:834px;top:1097.69px;font-size:25.3px;line-height:1;color:#121a26;font-weight:400;letter-spacing:0.000px;white-space:nowrap;will-change:transform;">Sick Leave</div>
<div style="position:absolute;left:1144px;top:1097.69px;font-size:25.3px;line-height:1;color:#121a26;font-weight:400;letter-spacing:0.000px;white-space:nowrap;will-change:transform;">12 Days</div>
<div style="position:absolute;left:1567px;top:1097.69px;font-size:25.3px;line-height:1;color:#121a26;font-weight:400;letter-spacing:0.000px;white-space:nowrap;will-change:transform;">Reset to zero</div>
<div style="position:absolute;left:1994.4px;top:1097.69px;font-size:25.3px;line-height:1;color:#5547a8;font-weight:400;letter-spacing:0.000px;white-space:nowrap;will-change:transform;">View</div>
<svg style="position:absolute;left:2161.5px;top:1087.9px;" width="16" height="36" viewBox="0 0 16 36" fill="none"><g stroke="#8a93a3" stroke-width="2.1"><circle cx="8" cy="8" r="3.4"/><circle cx="8" cy="18" r="3.4"/><circle cx="8" cy="28" r="3.4"/></g></svg>
<div style="position:absolute;left:803px;top:1172.5px;width:1482px;height:2px;background:#e9eaed"></div>
<div style="position:absolute;left:834px;top:1226.99px;font-size:25.3px;line-height:1;color:#121a26;font-weight:400;letter-spacing:0.000px;white-space:nowrap;will-change:transform;">Unpaid Leave</div>
<div style="position:absolute;left:1144px;top:1226.99px;font-size:25.3px;line-height:1;color:#121a26;font-weight:400;letter-spacing:0.000px;white-space:nowrap;will-change:transform;">Unlimited</div>
<div style="position:absolute;left:1567px;top:1226.99px;font-size:25.3px;line-height:1;color:#121a26;font-weight:400;letter-spacing:0.000px;white-space:nowrap;will-change:transform;">None</div>
<div style="position:absolute;left:1994.4px;top:1226.99px;font-size:25.3px;line-height:1;color:#5547a8;font-weight:400;letter-spacing:0.000px;white-space:nowrap;will-change:transform;">View</div>
<svg style="position:absolute;left:2161.5px;top:1217.2px;" width="16" height="36" viewBox="0 0 16 36" fill="none"><g stroke="#8a93a3" stroke-width="2.1"><circle cx="8" cy="8" r="3.4"/><circle cx="8" cy="18" r="3.4"/><circle cx="8" cy="28" r="3.4"/></g></svg>
<div style="position:absolute;left:803px;top:1300px;width:1482px;height:2px;background:#e9eaed"></div>
<div style="position:absolute;left:803px;top:1301.8px;width:1482px;height:58.700000000000045px;background:#f1f2f4"></div>
<div style="position:absolute;left:803px;top:1360.5px;width:1482px;height:2px;background:#b3bbc7"></div>
<div style="position:absolute;left:834.4px;top:1321.30px;font-size:20px;line-height:1;color:#1b2230;font-weight:400;letter-spacing:0.168px;white-space:nowrap;will-change:transform;">STATUTORY/INCIDENTAL</div>
<div style="position:absolute;left:1143.9px;top:1321.30px;font-size:20px;line-height:1;color:#1b2230;font-weight:400;letter-spacing:0.217px;white-space:nowrap;will-change:transform;">QUOTA</div>
<div style="position:absolute;left:1994.4px;top:1321.30px;font-size:20px;line-height:1;color:#1b2230;font-weight:400;letter-spacing:-0.149px;white-space:nowrap;will-change:transform;">ACTIONS</div>
<div style="position:absolute;left:834px;top:1413.79px;font-size:25.3px;line-height:1;color:#121a26;font-weight:400;letter-spacing:0.000px;white-space:nowrap;will-change:transform;">Paternity Leave</div>
<div style="position:absolute;left:1144px;top:1413.79px;font-size:25.3px;line-height:1;color:#121a26;font-weight:400;letter-spacing:0.000px;white-space:nowrap;will-change:transform;">5 Days</div>
<div style="position:absolute;left:1994.4px;top:1413.79px;font-size:25.3px;line-height:1;color:#5547a8;font-weight:400;letter-spacing:0.000px;white-space:nowrap;will-change:transform;">View</div>
<svg style="position:absolute;left:2161.5px;top:1404.0px;" width="16" height="36" viewBox="0 0 16 36" fill="none"><g stroke="#8a93a3" stroke-width="2.1"><circle cx="8" cy="8" r="3.4"/><circle cx="8" cy="18" r="3.4"/><circle cx="8" cy="28" r="3.4"/></g></svg>
<div style="position:absolute;left:803px;top:1488px;width:1482px;height:2px;background:#e9eaed"></div>
<div style="position:absolute;left:834px;top:1542.19px;font-size:25.3px;line-height:1;color:#121a26;font-weight:400;letter-spacing:0.000px;white-space:nowrap;will-change:transform;">Maternity Leave</div>
<div style="position:absolute;left:1144px;top:1542.19px;font-size:25.3px;line-height:1;color:#121a26;font-weight:400;letter-spacing:0.000px;white-space:nowrap;will-change:transform;">182 Days</div>
<div style="position:absolute;left:1994.4px;top:1542.19px;font-size:25.3px;line-height:1;color:#5547a8;font-weight:400;letter-spacing:0.000px;white-space:nowrap;will-change:transform;">View</div>
<svg style="position:absolute;left:2161.5px;top:1532.4px;" width="16" height="36" viewBox="0 0 16 36" fill="none"><g stroke="#8a93a3" stroke-width="2.1"><circle cx="8" cy="8" r="3.4"/><circle cx="8" cy="18" r="3.4"/><circle cx="8" cy="28" r="3.4"/></g></svg>
<div style="position:absolute;left:803px;top:1616.5px;width:1482px;height:2px;background:#e9eaed"></div>
<div style="position:absolute;left:2321px;top:727px;width:498px;height:586px;background:#fff;box-sizing:border-box;border:2px solid #e8e9ec;border-radius:6px"></div>
<div style="position:absolute;left:2354.7px;top:773.52px;font-size:29.5px;line-height:1;color:#121a26;font-weight:400;letter-spacing:0.000px;white-space:nowrap;will-change:transform;-webkit-text-stroke:0.9px #121a26">Rule based assignment</div>
<div style="position:absolute;left:2354.7px;top:821.54px;font-size:22.3px;line-height:1;color:#5d6878;font-weight:400;letter-spacing:-0.194px;white-space:nowrap;will-change:transform;">New employees following this rule will be</div>
<div style="position:absolute;left:2354.7px;top:853.54px;font-size:22.3px;line-height:1;color:#5d6878;font-weight:400;letter-spacing:-0.301px;white-space:nowrap;will-change:transform;">added to this leave plan automatically.</div>
<div style="position:absolute;left:2354px;top:928px;width:432px;height:240px;background:#e3f1f3;border-radius:9px"></div>
<svg style="position:absolute;left:2525px;top:1005px;" width="90" height="85" viewBox="0 0 90 85" fill="none"><path d="M10 32 Q10 26 16.7 26 Q23.4 26 23.4 33 L23.4 52.5 L31.5 42.5 Q35.5 39.2 40 40.5 L44.5 43.8 L35.2 57.5 L45.5 71.8 Q41.5 75.8 37 75.6 Q33.8 75.2 31.5 72 L23.4 60.5 L23.4 69 Q23.4 75.6 16.7 75.6 Q10 75.6 10 69 Z" fill="#000"/><path d="M32.07 27.88 L38.83 14.69 A3.1 3.1 0 0 0 32.91 12.83 L30.93 27.52 A0.6 0.6 0 0 0 32.07 27.88 Z" fill="#8cc063"/><path d="M42.17 31.57 L56.13 19.28 A3.9 3.9 0 0 0 50.02 14.43 L41.23 30.83 A0.6 0.6 0 0 0 42.17 31.57 Z" fill="#e2a43e"/><path d="M51.77 38.37 L71.64 27.06 A4.1 4.1 0 0 0 66.54 20.64 L51.03 37.43 A0.6 0.6 0 0 0 51.77 38.37 Z" fill="#4285be"/><path d="M57.67 49.27 L76.19 47.16 A3.9 3.9 0 0 0 73.94 39.69 L57.33 48.13 A0.6 0.6 0 0 0 57.67 49.27 Z" fill="#a0538f"/></svg>
<div style="position:absolute;left:2614px;top:1200px;width:172px;height:79px;box-sizing:border-box;border:2px solid #4a3ba8;border-radius:7px;background:#fff"></div>
<div style="position:absolute;left:2647.7px;top:1227.05px;font-size:27px;line-height:1;color:#4a3ba8;font-weight:400;letter-spacing:0.390px;white-space:nowrap;will-change:transform;">Add rule</div>
<div style="position:absolute;left:2466px;top:552px;width:320px;height:248px;background:#fff;border-radius:6px;box-shadow:0 5px 9px rgba(20,30,50,0.20), 0 0 2px rgba(20,30,50,0.10);z-index:9"></div>
<div style="position:absolute;left:2498.6px;top:591.86px;font-size:25.7px;line-height:1;color:#121a26;font-weight:400;letter-spacing:0.000px;white-space:nowrap;will-change:transform;z-index:10">Edit</div>
<div style="position:absolute;left:2498.6px;top:663.15px;font-size:25.7px;line-height:1;color:#121a26;font-weight:400;letter-spacing:-0.271px;white-space:nowrap;will-change:transform;z-index:10">Make as Default</div>
<div style="position:absolute;left:2498.6px;top:734.65px;font-size:25.7px;line-height:1;color:#121a26;font-weight:400;letter-spacing:-0.446px;white-space:nowrap;will-change:transform;z-index:10">Clone Leave Plan</div>
<div style="position:absolute;left:2474px;top:710.5px;width:255px;height:79px;box-sizing:border-box;border:7.5px solid #6c4ff0;border-radius:11px;z-index:10"></div>
<div style="position:absolute;left:2724px;top:1488px;width:96px;height:96px;background:#3b4050;border-radius:16px"></div>
<svg style="position:absolute;left:2724px;top:1488px;" width="96" height="96" viewBox="0 0 96 96" fill="none"><path d="M63.9 24.499999999999996 Q65.8 30.4 72.1 32.3 Q65.8 34.199999999999996 63.9 40.099999999999994 Q62.0 34.199999999999996 55.7 32.3 Q62.0 30.4 63.9 24.499999999999996 Z" fill="#fff"/><path d="M30.3 23.900000000000002 Q31.2 29.200000000000003 36.6 30.1 Q31.2 31.0 30.3 36.300000000000004 Q29.400000000000002 31.0 24.0 30.1 Q29.400000000000002 29.200000000000003 30.3 23.900000000000002 Z" fill="#fff"/><path d="M30.9 50.2 Q31.7 53.400000000000006 34.9 54.2 Q31.7 55.0 30.9 58.2 Q30.099999999999998 55.0 26.9 54.2 Q30.099999999999998 53.400000000000006 30.9 50.2 Z" fill="#fff"/><path d="M43.8 41.8 L63.8 69.2" stroke="#fff" stroke-width="5.2" stroke-linecap="round"/><path d="M44.6 42.8 L46.6 45.6" stroke="#3b4050" stroke-width="1.3" stroke-linecap="round"/></svg>
</body></html>
